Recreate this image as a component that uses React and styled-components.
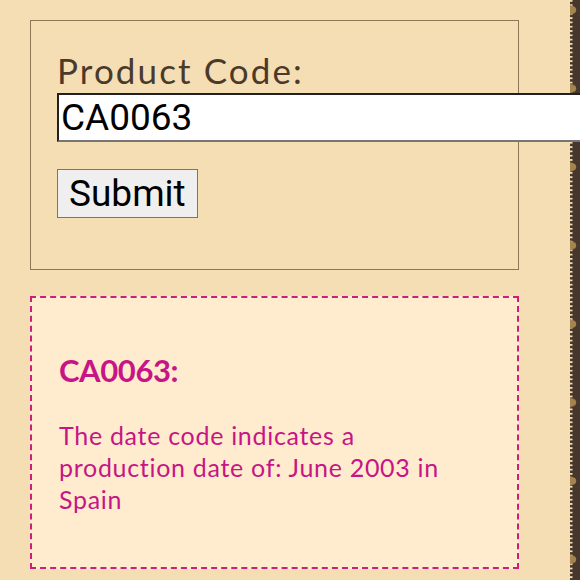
import React from "react";
import styled, { createGlobalStyle } from "styled-components";

const Global = createGlobalStyle`
  html, body { margin: 0; padding: 0; background: #f5deb3; }
  body { font-family: "Lato", "Noto Sans", sans-serif; }
  * { box-sizing: border-box; }
`;

const Page = styled.div`
  display: flex;
  width: 100%;
  min-height: 580px;
  overflow: hidden;
  background: #f5deb3;
`;

const Main = styled.main`
  flex: 1;
  min-width: 0;
  padding: 20px 51px 20px 30px;
  display: flex;
  flex-direction: column;
  gap: 26px;
`;

const Edge = styled.div`
  flex: 0 0 10px;
  background: #46362b;
  align-self: stretch;
  display: flex;
`;

const Form = styled.form`
  border: 1px solid #8d7656;
  padding: 28px 26px 51px;
  display: flex;
  flex-direction: column;
  align-items: flex-start;
`;

const Label = styled.label`
  font-family: "Lato", "Noto Sans", sans-serif;
  font-size: 35px;
  line-height: 42px;
  color: #4a3a2b;
  letter-spacing: 2.1px;
`;

const Input = styled.input`
  position: relative;
  z-index: 1;
  margin-top: 2px;
  width: 560px;
  font-family: "Roboto", "Liberation Sans", sans-serif;
  font-size: 37px;
  padding: 1px 2px;
  border: 2px inset #767676;
  background: #fff;
  color: #000;
  outline: none;
`;

const Button = styled.button`
  margin-top: 27px;
  font-family: "Roboto", "Liberation Sans", sans-serif;
  font-size: 37px;
  padding: 2px 11px;
  border: 1px solid #767676;
  background: #efefef;
  color: #000;
  cursor: pointer;
`;

const Result = styled.section`
  border: 2px dashed #c8207c;
  background: #ffebcd;
  padding: 54px 27px 52px;
  color: #c71585;
`;

const Heading = styled.h3`
  margin: 0 0 30px;
  font-family: "Lato", "Noto Sans", sans-serif;
  font-weight: 700;
  font-size: 31px;
  line-height: 37px;
  letter-spacing: -0.4px;
`;

const Text = styled.p`
  margin: 0;
  max-width: 400px;
  font-family: "Lato", "Noto Sans", sans-serif;
  font-size: 25px;
  line-height: 32px;
  letter-spacing: 0.7px;
`;

function Stitch() {
  return (
    <svg width="10" height="100%" style={{ display: "block", minHeight: 600 }}>
      <defs>
        <pattern id="notch" width="10" height="4.3" patternUnits="userSpaceOnUse">
          <rect x="0" y="0" width="2.5" height="1.8" fill="#f2dcb0" />
        </pattern>
        <pattern id="tri" width="10" height="78.5" patternUnits="userSpaceOnUse" y="5">
          <path d="M0 0 L5 2 Q7.5 5 5 8 L0 10 Z" fill="#a5854f" />
        </pattern>
      </defs>
      <rect width="10" height="100%" fill="url(#notch)" />
      <rect width="10" height="100%" fill="url(#tri)" />
    </svg>
  );
}

export default function App() {
  return (
    <Page>
      <Global />
      <Main>
        <Form onSubmit={(e) => e.preventDefault()}>
          <Label htmlFor="code">Product Code:</Label>
          <Input id="code" type="text" defaultValue="CA0063" />
          <Button type="submit">Submit</Button>
        </Form>
        <Result>
          <Heading>CA0063:</Heading>
          <Text>The date code indicates a production date of: June 2003 in Spain</Text>
        </Result>
      </Main>
      <Edge>
        <Stitch />
      </Edge>
    </Page>
  );
}
